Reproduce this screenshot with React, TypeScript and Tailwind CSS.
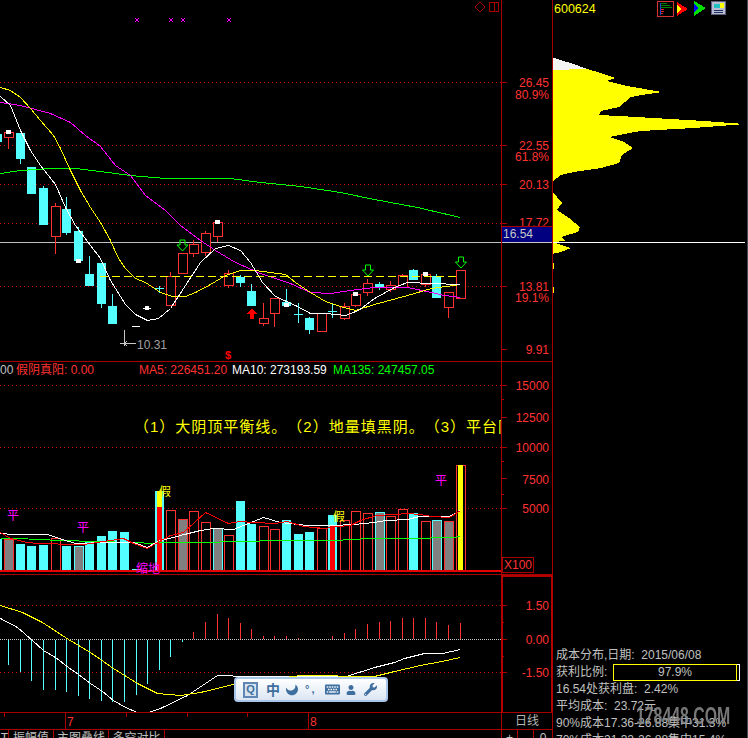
import React from 'react';
import { FaKeyboard, FaMoon, FaUser, FaWrench } from 'react-icons/fa';

type Pt = number[];

const RED = '#ff3232';
const CYAN = '#54ffff';
const GRID = '#c80000';
const LINE = '#a80000';

// left edge, body top, body bottom, wick top, wick bottom, kind
const candles: [number, number, number, number, number, 'u' | 'd'][] = [
  [-7, 134, 142, 134, 142, 'd'],
  [4, 132, 137, 132, 149, 'u'],
  [16, 133, 159, 133, 164, 'd'],
  [27, 167, 194, 167, 194, 'd'],
  [39, 188, 225, 186, 225, 'd'],
  [51, 206, 236, 203, 254, 'u'],
  [62, 209, 233, 197, 235, 'd'],
  [74, 231, 261, 227, 261, 'd'],
  [85, 274, 286, 256, 286, 'd'],
  [97, 263, 304, 263, 308, 'd'],
  [108, 306, 324, 294, 324, 'd'],
  [166, 276, 305, 272, 305, 'u'],
  [178, 253, 273, 253, 273, 'u'],
  [189, 244, 253, 240, 257, 'u'],
  [201, 233, 252, 231, 256, 'u'],
  [213, 222, 236, 222, 242, 'u'],
  [224, 273, 285, 270, 288, 'u'],
  [236, 277, 283, 275, 287, 'd'],
  [247, 291, 306, 284, 306, 'd'],
  [259, 318, 323, 303, 326, 'u'],
  [270, 298, 313, 298, 327, 'u'],
  [282, 302, 306, 289, 306, 'd'],
  [305, 318, 330, 317, 334, 'd'],
  [317, 313, 331, 313, 331, 'u'],
  [340, 306, 318, 303, 320, 'u'],
  [351, 294, 305, 294, 307, 'u'],
  [363, 283, 292, 279, 296, 'u'],
  [375, 284, 287, 282, 290, 'd'],
  [386, 285, 289, 281, 292, 'u'],
  [398, 275, 287, 274, 287, 'u'],
  [409, 270, 280, 269, 280, 'd'],
  [421, 274, 284, 274, 287, 'u'],
  [432, 276, 298, 274, 298, 'd'],
  [444, 292, 307, 292, 318, 'u'],
  [456, 270, 298, 270, 299, 'u'],
];

// small crosses: center x, y, top, bottom
const crosses: Pt[] = [
  [159, 288, 286, 293],
  [298, 314, 303, 323],
  [332, 311, 304, 318],
];

const whiteCaps: Pt[] = [
  [6, 130], [76, 259], [215, 220], [284, 303], [353, 292], [423, 272],
];

const greenArrows: Pt[] = [[182.5, 240], [368, 265], [461, 257]];

const priceYellow: Pt[] = [[0, 87], [10, 90], [20, 97], [30, 108], [40, 120], [53, 135], [60, 148], [70, 170], [80, 190], [90, 207], [100, 222], [110, 240], [118, 258], [125, 268], [135, 278], [145, 282], [160, 292], [172, 296], [185, 296], [195, 292], [210, 284], [225, 275], [240, 270], [255, 270], [270, 272], [285, 274], [295, 282], [310, 292], [325, 301], [340, 306], [355, 310], [374, 304], [407, 295], [431, 288], [460, 284]];
const priceWhite: Pt[] = [[0, 96], [10, 105], [20, 130], [30, 150], [40, 165], [55, 184], [65, 207], [75, 225], [90, 245], [100, 258], [110, 280], [125, 304], [135, 314], [147, 320], [158, 318], [170, 308], [185, 285], [200, 262], [215, 248], [228, 245], [240, 250], [250, 262], [262, 282], [275, 296], [295, 305], [310, 313], [325, 313], [345, 315], [358, 310], [374, 298], [394, 287], [407, 282], [431, 283], [460, 284]];
const priceMagenta: Pt[] = [[0, 102], [20, 105], [50, 113], [70, 122], [85, 135], [100, 146], [115, 165], [130, 175], [145, 195], [165, 210], [180, 225], [200, 240], [215, 250], [235, 262], [260, 273], [290, 283], [310, 292], [330, 293], [350, 290], [374, 287], [407, 287], [431, 292], [444, 295], [460, 297]];
const priceGreen: Pt[] = [[0, 173], [20, 170], [50, 168], [75, 168], [100, 171], [130, 175], [165, 178], [230, 178], [260, 182], [300, 186], [340, 192], [374, 199], [417, 207], [460, 217]];

const volBars: [number, number, 'c' | 'r' | 'g' | 'k'][] = [
  [-7, 539, 'c'], [4, 539, 'g'], [16, 544, 'c'], [27, 546, 'c'], [39, 545, 'c'], [51, 538, 'r'],
  [62, 546, 'c'], [74, 546, 'k'], [85, 542, 'c'], [97, 536, 'c'], [108, 531, 'c'], [120, 532, 'c'],
  [132, 569, 'c'], [166, 510, 'r'], [178, 519, 'g'], [189, 511, 'r'], [201, 522, 'r'], [213, 528, 'k'],
  [224, 535, 'r'], [236, 501, 'c'], [247, 524, 'c'], [259, 526, 'r'], [270, 529, 'r'], [282, 520, 'c'],
  [294, 534, 'c'], [305, 532, 'c'], [317, 528, 'r'], [340, 520, 'r'], [351, 511, 'r'], [363, 513, 'r'],
  [375, 512, 'k'], [386, 516, 'r'], [398, 509, 'r'], [409, 513, 'c'], [421, 521, 'r'], [432, 520, 'k'],
  [444, 521, 'g'],
];

const volRed: Pt[] = [[0, 532], [10, 538], [27, 542], [38, 543], [52, 543], [62, 544], [83, 544], [110, 540], [123, 538], [133, 543], [147, 548], [157, 542], [170, 535], [183, 532], [205, 512], [228, 523], [240, 521], [253, 522], [275, 523], [287, 521], [303, 526], [325, 528], [337, 526], [350, 525], [360, 520], [376, 515], [394, 514], [407, 513], [419, 514], [431, 516], [449, 517], [460, 510]];
const volWhite: Pt[] = [[0, 533], [13, 534], [47, 534], [62, 539], [75, 543], [107, 542], [133, 542], [147, 547], [157, 541], [180, 535], [200, 530], [213, 528], [233, 529], [248, 523], [263, 517], [280, 522], [307, 525], [333, 525], [353, 524], [374, 522], [386, 520], [407, 519], [419, 516], [449, 516], [460, 510]];
const volGreen: Pt[] = [[0, 538], [17, 538], [60, 540], [133, 542], [153, 543], [157, 542], [200, 542], [280, 540], [333, 540], [370, 538], [407, 538], [454, 537], [460, 536]];

// histogram: x, tip y
const macdDown: Pt[] = [[8, 665], [20, 672], [31, 681], [43, 690], [55, 690], [66, 692], [78, 696], [89, 699], [101, 701], [112, 702], [124, 702], [136, 695], [147, 684], [159, 670], [170, 657], [182, 642]];
const macdUp: Pt[] = [[193, 632], [205, 622], [217, 614], [228, 618], [240, 623], [251, 629], [263, 636], [274, 636], [286, 636], [298, 638], [332, 636], [344, 633], [355, 629], [367, 624], [379, 622], [390, 621], [402, 618], [413, 618], [425, 618], [436, 622], [448, 625], [460, 623]];
const macdWhite: Pt[] = [[0, 618], [17, 627], [32, 640], [43, 650], [55, 657], [68, 667], [78, 674], [90, 683], [102, 691], [113, 700], [125, 707], [137, 712], [148, 712], [160, 708], [187, 695], [217, 675], [248, 676], [346, 676], [374, 667], [394, 662], [404, 658], [424, 653], [442, 653], [460, 649]];
const macdYellow: Pt[] = [[0, 605], [22, 612], [42, 622], [68, 639], [90, 652], [113, 668], [137, 683], [157, 693], [180, 695], [200, 692], [233, 684], [300, 675], [374, 676], [394, 671], [420, 665], [441, 661], [460, 657]];

const Curve = ({ data, color }: { data: Pt[]; color: string }) => (
  <polyline
    points={data.map((p) => p.join(',')).join(' ')}
    transform="translate(0.5 0.5)"
    fill="none"
    stroke={color}
    strokeWidth="1"
  />
);

const Grid = ({ ys, dash = '1 3', color = GRID }: { ys: number[]; dash?: string; color?: string }) => (
  <>
    {ys.map((y) => (
      <line key={y} x1="0" x2="501" y1={y + 0.5} y2={y + 0.5} stroke={color} strokeDasharray={dash} />
    ))}
  </>
);

const AxisLabel = ({ y, children }: { y: number; children: React.ReactNode }) => (
  <text x="549" y={y + 4.5} textAnchor="end" fontSize="12" fill={RED}>
    {children}
  </text>
);

const Tick = ({ y, short }: { y: number; short?: boolean }) => (
  <line x1="502" x2={short ? 504 : 507} y1={y + 0.5} y2={y + 0.5} stroke={LINE} />
);

function PriceChart() {
  return (
    <svg className="block h-[361px] w-[501px]" viewBox="0 0 501 361" shapeRendering="crispEdges">
      <Grid ys={[82, 145, 184, 223, 286]} />
      <line x1="0" x2="501" y1="242.5" y2="242.5" stroke="#c0c0c0" />
      {[137, 171, 183, 229].map((x) => (
        <path key={x} d={`M${x - 2} 18l4 4M${x + 2} 18l-4 4`} stroke="#ff00ff" fill="none" />
      ))}
      <path d="M480 2l5 5-5 5-5-5z" stroke={LINE} fill="none" shapeRendering="auto" />
      <path d="M489.5 2.5h9v9h-9zM494.5 2.5v9" stroke={LINE} fill="none" />
      {candles.map(([x, top, bot, wt, wb, kind]) => (
        <g key={x}>
          <line x1={x + 4.5} x2={x + 4.5} y1={wt} y2={wb} stroke={kind === 'u' ? RED : CYAN} />
          {kind === 'u' ? (
            <rect x={x + 0.5} y={top + 0.5} width="9" height={bot - top} fill="#000" stroke={RED} />
          ) : (
            <rect x={x} y={top} width="9" height={bot - top} fill={CYAN} />
          )}
        </g>
      ))}
      {crosses.map(([x, y, t, b]) => (
        <path key={x} d={`M${x - 4} ${y + 0.5}h9M${x + 0.5} ${t}V${b}`} stroke={CYAN} fill="none" />
      ))}
      {whiteCaps.map(([x, y]) => (
        <rect key={x} x={x} y={y} width="5" height="4" fill="#fff" />
      ))}
      <path d="M124.5 330v16M120 343.5h16M124 343.5l3-2M124 343.5l3 2" stroke="#c8c8c8" fill="none" />
      <rect x="132" y="326" width="8" height="1" fill="#fff" />
      <rect x="143" y="308" width="8" height="1" fill="#fff" />
      <rect x="145" y="306" width="4" height="4" fill="#fff" />
      <text x="137" y="349" fontSize="12" fill="#a0a0a0">10.31</text>
      <Curve data={priceGreen} color="#00ff00" />
      <Curve data={priceMagenta} color="#ff00ff" />
      <Curve data={priceYellow} color="#ffff00" />
      <Curve data={priceWhite} color="#ffffff" />
      <line x1="100" x2="456" y1="276.5" y2="276.5" stroke="#ffff00" strokeDasharray="8 4" />
      {greenArrows.map(([cx, y]) => (
        <polygon
          key={cx}
          points={`${cx - 2.5},${y} ${cx + 2.5},${y} ${cx + 2.5},${y + 5} ${cx + 5.5},${y + 5} ${cx},${y + 11} ${cx - 5.5},${y + 5} ${cx - 2.5},${y + 5}`}
          fill="none"
          stroke="#00ff00"
          shapeRendering="auto"
        />
      ))}
      <polygon points="252,308 257,314 254,314 254,319 250,319 250,314 247,314" fill="#ff0000" />
      <text x="225" y="359" fontSize="11" fontWeight="700" fill="#ff0000">$</text>
    </svg>
  );
}

function PriceAxis() {
  return (
    <svg className="block h-[361px] w-[50px]" viewBox="502 0 50 361" shapeRendering="crispEdges">
      {[82, 145, 184, 223, 286, 349].map((y) => (
        <Tick key={y} y={y} />
      ))}
      <AxisLabel y={82}>26.45</AxisLabel>
      <AxisLabel y={94}>80.9%</AxisLabel>
      <AxisLabel y={145}>22.55</AxisLabel>
      <AxisLabel y={156}>61.8%</AxisLabel>
      <AxisLabel y={184}>20.13</AxisLabel>
      <AxisLabel y={222}>17.72</AxisLabel>
      <AxisLabel y={286}>13.81</AxisLabel>
      <AxisLabel y={297}>19.1%</AxisLabel>
      <AxisLabel y={349}>9.91</AxisLabel>
      <rect x="502" y="226" width="50" height="16" fill="#000080" />
      <line x1="502" x2="552" y1="226.5" y2="226.5" stroke={LINE} />
      <text x="503" y="238" fontSize="12" fill="#c8c8c8">16.54</text>
      <line x1="502" x2="552" y1="242.5" y2="242.5" stroke="#c8c8c8" />
    </svg>
  );
}

function VolumeChart() {
  return (
    <svg className="block h-[212px] w-[501px]" viewBox="0 362 501 212" shapeRendering="crispEdges">
      <Grid ys={[385, 447, 508]} />
      {volBars.map(([x, top, kind]) =>
        kind === 'c' ? (
          <rect key={x} x={x} y={top} width="9" height={570 - top} fill={CYAN} />
        ) : kind === 'r' ? (
          <rect key={x} x={x + 0.5} y={top + 0.5} width="9" height={570 - top} fill="#000" stroke={RED} />
        ) : (
          <rect key={x} x={x + 0.5} y={top + 0.5} width="9" height={570 - top} fill="#808080" stroke={kind === 'g' ? RED : CYAN} />
        )
      )}
      <rect x="155" y="491" width="9" height="79" fill={CYAN} />
      <rect x="157" y="491" width="5" height="16" fill="#ffff00" />
      <rect x="157" y="507" width="5" height="63" fill="#ff0000" />
      <rect x="328" y="515" width="9" height="55" fill={CYAN} />
      <rect x="330" y="526" width="5" height="44" fill="#ff0000" />
      <rect x="456.5" y="465.5" width="9" height="105" fill="#000" stroke={RED} />
      <rect x="458" y="465" width="5" height="105" fill="#ffff00" />
      <rect x="0" y="570" width="501" height="2" fill="#e60000" />
      <Curve data={volGreen} color="#00ff00" />
      <Curve data={volWhite} color="#ffffff" />
      <Curve data={volRed} color="#ff0000" />
      <text x="7" y="520" fontSize="12" fill="#ff00ff">平</text>
      <text x="77" y="532" fontSize="12" fill="#ff00ff">平</text>
      <text x="435" y="485" fontSize="12" fill="#ff00ff">平</text>
      <text x="159" y="496" fontSize="12" fill="#ffff00">假</text>
      <text x="333" y="521" fontSize="12" fill="#ffff00">假</text>
      <text x="136" y="573" fontSize="12" fill="#ff00ff">缩地</text>
    </svg>
  );
}

function VolumeAxis() {
  return (
    <svg className="block h-[212px] w-[50px]" viewBox="502 362 50 212" shapeRendering="crispEdges">
      {[385, 417, 447, 478, 508].map((y) => (
        <Tick key={y} y={y} />
      ))}
      {[399, 461, 494].map((y) => (
        <Tick key={y} y={y} short />
      ))}
      <AxisLabel y={385}>15000</AxisLabel>
      <AxisLabel y={417}>12500</AxisLabel>
      <AxisLabel y={447}>10000</AxisLabel>
      <AxisLabel y={479}>7500</AxisLabel>
      <AxisLabel y={508}>5000</AxisLabel>
      <rect x="502.5" y="557.5" width="31" height="15" fill="none" stroke={LINE} />
      <text x="504" y="569" fontSize="12" fill={RED}>X100</text>
    </svg>
  );
}

function MacdChart() {
  return (
    <svg className="block h-[137px] w-[501px]" viewBox="0 575 501 137" shapeRendering="crispEdges">
      <Grid ys={[605, 672]} />
      <Grid ys={[639]} dash="1 1" color="#c8c8c8" />
      {macdDown.map(([x, tip]) => (
        <line key={x} x1={x + 0.5} x2={x + 0.5} y1="640" y2={tip} stroke={CYAN} />
      ))}
      {macdUp.map(([x, tip]) => (
        <line key={x} x1={x + 0.5} x2={x + 0.5} y1="639" y2={tip} stroke={RED} />
      ))}
      <Curve data={macdWhite} color="#ffffff" />
      <Curve data={macdYellow} color="#ffff00" />
    </svg>
  );
}

function MacdAxis() {
  return (
    <svg className="block h-[135px] w-[48px]" viewBox="503 577 48 135" shapeRendering="crispEdges">
      {[605, 639, 672].map((y) => (
        <Tick key={y} y={y} />
      ))}
      {[622, 656].map((y) => (
        <Tick key={y} y={y} short />
      ))}
      <AxisLabel y={605}>1.50</AxisLabel>
      <AxisLabel y={639}>0.00</AxisLabel>
      <AxisLabel y={672}>-1.50</AxisLabel>
    </svg>
  );
}

function TimeAxis() {
  return (
    <svg className="block h-[16px] w-[501px]" viewBox="0 713 501 16" shapeRendering="crispEdges">
      {[4, 126, 187, 247].map((x) => (
        <line key={x} x1={x + 0.5} x2={x + 0.5} y1="713" y2="717" stroke={LINE} />
      ))}
      {[65, 308].map((x) => (
        <line key={x} x1={x + 0.5} x2={x + 0.5} y1="713" y2="729" stroke={LINE} />
      ))}
      <text x="67" y="726" fontSize="12" fill={RED}>7</text>
      <text x="310" y="726" fontSize="12" fill={RED}>8</text>
    </svg>
  );
}

// Four small toolbar glyphs beside the stock code
function PanelIcons() {
  return (
    <svg className="block h-[18px] w-[70px]" viewBox="657 0 70 18" shapeRendering="crispEdges">
      <rect x="657.5" y="1.5" width="16" height="15" fill="#000" stroke="#d23232" />
      <rect x="660" y="3" width="1" height="12" fill="#2040d0" />
      <path d="M661 3.5h6M661 5.5h9M661 7.5h11" stroke="#008000" />
      <path d="M661 9.5h3M661 11.5h3M661 13.5h2" stroke="#e02020" />
      <polygon points="677,2 688,9 677,16" fill="#ff0000" />
      <polygon points="677,5 682,9 677,13" fill="#ffff00" />
      <polygon points="694,1 706,8 694,16" fill="#00e000" />
      <polygon points="694,3 698,8 694,13" fill="#0000ff" />
      <rect x="711.5" y="1.5" width="14" height="13" fill="#b8bcd0" stroke="#606080" />
      <rect x="714" y="4" width="6" height="4" fill="#20c0c0" />
      <rect x="720" y="3" width="4" height="5" fill="#ffff00" />
      <path d="M714 10.5h9M714 12.5h9" stroke="#203060" />
    </svg>
  );
}

function ChipChart() {
  return (
    <svg className="block h-[280px] w-[194px] shrink-0" viewBox="1 20 194 280" shapeRendering="crispEdges">
      <polygon points="0,57 8,60 22,64 35,69 35,70 0,70" fill="#f4f4f4" />
      <polygon
        points="0,70 35,69 49,73 63,78 55,81 75,86 110,92 89,95 79,97 67,107 49,111 47,115 85,117 152,121 193,124 142,128 89,131 72,134 57,137 72,142 81,148 70,155 67,163 49,168 22,172 9,175 0,182"
        fill="#ffff00"
      />
      <polygon points="0,191 10,203 5,210 17,218 28,227 26,232 9,237 14,241 0,242" fill="#ffff00" />
      <polygon points="0,242 19,248 9,252 0,254" fill="#ffff00" />
      <rect x="1" y="263" width="1" height="6" fill="#ffff00" />
      <rect x="1" y="287" width="1" height="6" fill="#ffff00" />
      <line x1="0" x2="193" y1="242.5" y2="242.5" stroke="#ffffff" />
    </svg>
  );
}

function ImeBar() {
  return (
    <div className="absolute left-[234px] top-[677px] flex h-[25px] w-[154px] items-center rounded-[4px] border-2 border-[#a9c6ea] bg-gradient-to-b from-white to-[#dbe6f3] pl-[7px] text-[#3f6f9f]">
      <div className="flex h-[16px] w-[15px] shrink-0 items-center justify-center border-2 border-[#5f86b4] bg-[#d5e2f0] text-[11px] leading-none font-bold">
        Q
      </div>
      <span className="ml-[8px] text-[14px] leading-none font-bold">中</span>
      <FaMoon size={12} className="ml-[6px] shrink-0 -rotate-90" />
      <span className="ml-[7px] w-[11px] text-[11px] leading-none font-bold tracking-[2px]">°,</span>
      <FaKeyboard size={15} className="ml-[9px] shrink-0" />
      <FaUser size={10} className="ml-[6px] shrink-0" />
      <FaWrench size={13} className="ml-[8px] shrink-0" />
    </div>
  );
}

const statRow = 'h-[17px] leading-[17px] whitespace-nowrap';

export default function App() {
  return (
    <div className="relative flex h-[738px] w-[748px] overflow-hidden bg-black font-['Liberation_Sans','Noto_Sans_CJK_SC',sans-serif] text-xs">
      {/* Left block: charts + value axes */}
      <div className="flex w-[553px] shrink-0 flex-col">
        <div className="flex h-[362px] shrink-0 border-b border-[#a80000]">
          <PriceChart />
          <div className="w-[52px] border-x border-[#a80000]">
            <PriceAxis />
          </div>
        </div>

        <div className="flex h-[213px] shrink-0 border-b border-[#a80000]">
          <div className="relative w-[501px]">
            <VolumeChart />
            {/* legend line */}
            <div className="absolute top-[1px] left-0 flex h-[14px] items-center leading-[14px] whitespace-nowrap">
              <span className="w-[16px] text-[#c0c0c0]">00</span>
              <span className="w-[123px] text-[#ff3232]">假阴真阳: 0.00</span>
              <span className="w-[93px] text-[#ff3232]">MA5: 226451.20</span>
              <span className="w-[101px] text-white">MA10: 273193.59</span>
              <span className="text-[#00ff00]">MA135: 247457.05</span>
            </div>
            <div className="absolute top-[56px] left-0 w-[501px] overflow-hidden pl-[134px] text-[15px] leading-[18px] tracking-[1px] whitespace-nowrap text-[#ffff00] [text-spacing-trim:space-all]">
              （1）大阴顶平衡线。（2）地量填黑阴。（3）平台阴线
            </div>
          </div>
          <div className="w-[52px] border-x border-[#a80000]">
            <VolumeAxis />
          </div>
        </div>

        <div className="flex h-[138px] shrink-0 border-b border-[#a80000]">
          <MacdChart />
          <div className="w-[52px] border-x-2 border-t-2 border-[#b40000]">
            <MacdAxis />
          </div>
        </div>

        <div className="flex h-[17px] shrink-0 border-b border-[#a80000]">
          <TimeAxis />
          <div className="w-[52px] border-x border-[#a80000] text-center leading-[16px] text-[#b4b4b4]">
            日线
          </div>
        </div>

        {/* Bottom tabs, cut by the window edge */}
        <div className="flex flex-1 overflow-hidden leading-[16px] whitespace-nowrap text-[#c0c0c0]">
          <div className="w-[9px] border-r border-[#a80000] text-right">T</div>
          <div className="w-[45px] border-r border-[#a80000] text-center">振幅值</div>
          <div className="w-[55px] border-r border-[#a80000] text-center">主图叠线</div>
          <div className="w-[56px] border-r border-[#a80000] text-center">多空对比</div>
          <div className="w-[336px]" />
          <div className="flex w-[52px] border-x border-[#a80000] text-center">
            <div className="w-[16px] border-r border-[#a80000]">+</div>
            <div className="w-[16px] border-r border-[#a80000]">-</div>
            <div className="flex-1">0</div>
          </div>
        </div>
      </div>

      {/* Right block: cost distribution */}
      <div className="flex w-[194px] shrink-0 flex-col">
        <div className="flex h-[20px] shrink-0 items-start">
          <span className="pt-[1px] pl-[1px] text-[12.5px] leading-[16px] text-[#ffff00]">600624</span>
          <div className="ml-[61px]">
            <PanelIcons />
          </div>
        </div>
        <ChipChart />
        <div className="mt-[347px] shrink-0 pl-[3px] text-[#c0c0c0]">
          <div className={statRow}>成本分布,日期:&nbsp; 2015/06/08</div>
          <div className={`${statRow} flex`}>
            <span className="w-[57px]">获利比例:</span>
            <div className="flex h-[17px] w-[127px] border-y border-r border-white">
              <div className="-my-px h-[17px] w-[124px] border border-[#ffff00] text-center leading-[15px]">97.9%</div>
            </div>
          </div>
          <div className={statRow}>16.54处获利盘:&nbsp; 2.42%</div>
          <div className={statRow}>平均成本:&nbsp; 23.72元</div>
          <div className={statRow}>90%成本17.36-26.88集中31.3%</div>
          <div className={statRow}>70%成本21.32-26.88集中15.4%</div>
        </div>
      </div>
      <div className="w-px shrink-0 bg-[#454a55]" />

      <ImeBar />
      {/* watermark over the stats */}
      <div className="absolute top-[702px] left-[636px] origin-left scale-x-[0.66] text-[24px] leading-[28px] font-bold whitespace-nowrap text-[#8c8c8c] opacity-85 blur-[0.6px]">
        178448.COM
      </div>
    </div>
  );
}
